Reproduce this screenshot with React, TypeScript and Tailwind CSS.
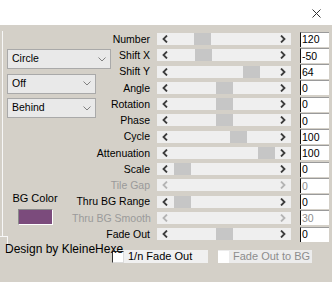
import React from "react";

type Row = { label: string; value: string; thumb?: number; disabled?: boolean };

// thumb = left x of the thumb, measured from the slider's left edge
const rows: Row[] = [
  { label: "Number", value: "120", thumb: 37 },
  { label: "Shift X", value: "-50", thumb: 38 },
  { label: "Shift Y", value: "64", thumb: 86 },
  { label: "Angle", value: "0", thumb: 59 },
  { label: "Rotation", value: "0", thumb: 59 },
  { label: "Phase", value: "0", thumb: 59 },
  { label: "Cycle", value: "100", thumb: 73 },
  { label: "Attenuation", value: "100", thumb: 101 },
  { label: "Scale", value: "0", thumb: 17 },
  { label: "Tile Gap", value: "0", disabled: true },
  { label: "Thru BG Range", value: "0", thumb: 17 },
  { label: "Thru BG Smooth", value: "30", disabled: true },
  { label: "Fade Out", value: "0", thumb: 59 },
];

function Arrow({ dir, disabled }: { dir: "left" | "right"; disabled?: boolean }) {
  return (
    <svg width="6" height="8" viewBox="0 0 6 8" className="shrink-0">
      <polyline
        points={dir === "left" ? "5,0.5 1.5,4 5,7.5" : "1,0.5 4.5,4 1,7.5"}
        fill="none"
        stroke={disabled ? "#b4b4b4" : "#3c3c3c"}
        strokeWidth="1.8"
      />
    </svg>
  );
}

function Slider({ thumb, disabled }: { thumb?: number; disabled?: boolean }) {
  return (
    <div className="relative flex h-[12px] w-[134px] items-center justify-between bg-[#efefef] px-[5px]">
      <Arrow dir="left" disabled={disabled} />
      {thumb !== undefined && (
        <div className="absolute top-0 h-[12px] w-[17px] bg-[#c6c6c6]" style={{ left: thumb }} />
      )}
      <Arrow dir="right" disabled={disabled} />
    </div>
  );
}

function Select({ text, width }: { text: string; width: string }) {
  return (
    <div
      className={`flex h-[20px] ${width} items-center justify-between border border-[#a9a9a9] bg-[#e9e9e9] pl-[4px] pr-[4px] text-[10.5px] text-black`}
    >
      <span>{text}</span>
      <svg width="8" height="5" viewBox="0 0 8 5">
        <polyline points="0.5,0.5 4,4 7.5,0.5" fill="none" stroke="#808080" strokeWidth="1" />
      </svg>
    </div>
  );
}

export default function App() {
  return (
    <div className="relative h-[282px] w-[332px] overflow-hidden bg-[#d4d0c8] font-['Liberation_Sans',Arial,sans-serif]">
      <div className="flex h-[25px] items-start justify-end bg-white pr-[11px] pt-[9px]">
        <svg width="9" height="9" viewBox="0 0 9 9">
          <path d="M0.5 0.5 L8.5 8.5 M8.5 0.5 L0.5 8.5" stroke="#333" strokeWidth="1" />
        </svg>
      </div>

      <div className="flex pt-[6px]">
        <div className="ml-[2px] flex h-[206px] w-[70px] shrink-0 flex-col border-l border-[#f7f7f7] pl-[4px] pt-[18px]">
          <div className="flex flex-col gap-[4.5px]">
            <Select text="Circle" width="w-[104px] shrink-0" />
            <Select text="Off" width="w-[89px] shrink-0" />
            <Select text="Behind" width="w-[89px] shrink-0" />
          </div>
          <div className="mt-[74px] flex w-[56px] flex-col items-center">
            <span className="text-[11px] leading-[13px] text-black">BG Color</span>
            <div className="mt-[4px] h-[16px] w-[35px] border border-b-white border-l-[#8a8a8a] border-r-white border-t-[#8a8a8a] bg-[#7b4b7c]" />
          </div>
        </div>

        <div className="flex flex-col">
          {rows.map((row) => (
            <div key={row.label} className="flex h-[16.25px] items-center">
              <span
                className={`w-[78px] whitespace-nowrap text-right text-[10.5px] leading-none ${
                  row.disabled ? "text-[#9a9a9a]" : "text-black"
                }`}
              >
                {row.label}
              </span>
              <div className="ml-[7px]">
                <Slider thumb={row.thumb} disabled={row.disabled} />
              </div>
              <div
                className={`ml-[9px] flex h-[15px] w-[29px] items-center border-l border-t border-l-[#111] border-t-[#9a9a9a] bg-white pl-[1px] text-[10.5px] leading-none ${
                  row.disabled ? "text-[#8e8e8e]" : "text-black"
                }`}
              >
                {row.value}
              </div>
            </div>
          ))}
        </div>
      </div>

      <div className="mt-[8px] flex items-center pl-[112px] text-[11px] leading-none">
        <div className="flex h-[13px] w-[96px] items-center bg-[#f0f0f0]">
          <div className="h-[12px] w-[12px] border border-b-[#dcdcdc] border-l-[#333] border-r-[#dcdcdc] border-t-[#333] bg-white" />
          <span className="ml-[4px] text-black">1/n Fade Out</span>
        </div>
        <div className="ml-[10px] flex h-[13px] w-[94px] items-center bg-[#ececec]">
          <div className="h-[12px] w-[11px] bg-white" />
          <span className="ml-[4px] text-[#8c8c8c]">Fade Out to BG</span>
        </div>
      </div>

      <div className="absolute left-0 top-[236px] h-[16px] w-[8px] border-r border-t border-[#f7f7f7]" />
      <span className="absolute left-[5px] top-[242px] text-[12px] leading-[14px] text-black">
        Design by KleineHexe
      </span>
    </div>
  );
}
